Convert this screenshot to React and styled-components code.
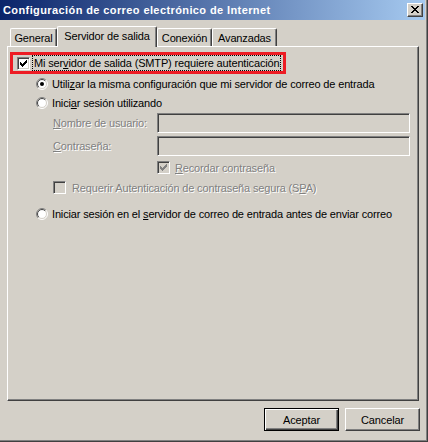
import React from 'react'
import styled, { createGlobalStyle } from 'styled-components'

const GlobalStyle = createGlobalStyle`
  body {
    margin: 0;
    background: #d4d0c8;
  }
`;

const face = '#d4d0c8';
const shadow = '#808080';
const dark = '#404040';

const Outer = styled.div`
  width: 428px;
  height: 442px;
  box-sizing: border-box;
  border-right: 1px solid ${dark};
  border-bottom: 1px solid ${dark};
  font-family: "Liberation Sans", Arial, sans-serif;
  font-size: 11px;
  letter-spacing: -0.15px;
  color: #000;
`;

const Inner = styled.div`
  height: 100%;
  box-sizing: border-box;
  background: ${face};
  border-right: 1px solid ${shadow};
  border-bottom: 1px solid ${shadow};
  padding-right: 1px;
  display: flex;
  flex-direction: column;
`;

const TitleBar = styled.div`
  height: 20px;
  display: flex;
  align-items: center;
  justify-content: space-between;
  padding: 0 2px 0 3px;
  background: linear-gradient(to right, #0a246a, #a6caf0);
  color: #fff;
  font-weight: bold;
  font-size: 11px;
  letter-spacing: 0.4px;
`;

const CloseButton = styled.div`
  width: 16px;
  height: 14px;
  box-sizing: border-box;
  background: ${face};
  border-top: 1px solid #fff;
  border-left: 1px solid #fff;
  border-right: 1px solid ${dark};
  border-bottom: 1px solid ${dark};
  box-shadow: inset -1px -1px 0 ${shadow};
  display: flex;
  padding: 2px 0 0 3px;
`;

const Body = styled.div`
  flex: 1;
  padding: 6px 6px 0 7px;
  display: flex;
  flex-direction: column;
`;

const TabStrip = styled.div`
  height: 20px;
  display: flex;
  align-items: flex-end;
  padding-left: 3px;
  position: relative;
  z-index: 1;
`;

const Tab = styled.div`
  width: ${p => p.$w}px;
  height: ${p => (p.$active ? 21 : 18)}px;
  margin-bottom: ${p => (p.$active ? -1 : 0)}px;
  box-sizing: border-box;
  background: ${face};
  border-top: 1px solid #fff;
  border-left: 1px solid #fff;
  border-right: 1px solid ${dark};
  border-top-left-radius: 2px;
  border-top-right-radius: 2px;
  box-shadow: inset -1px 0 0 ${shadow};
  display: flex;
  justify-content: center;
  padding-top: 3px;
  white-space: nowrap;
`;

const Panel = styled.div`
  height: 355px;
  box-sizing: border-box;
  border-top: 1px solid #fff;
  border-left: 1px solid #fff;
  border-right: 1px solid ${dark};
  border-bottom: 1px solid ${dark};
  box-shadow: inset -1px -1px 0 ${shadow};
  padding: 5px 0 0 2px;
  display: flex;
  flex-direction: column;
`;

const Highlight = styled.div`
  width: 276px;
  height: 22px;
  box-sizing: border-box;
  border: 3px solid #ed1c24;
  display: flex;
  align-items: center;
  gap: 3px;
  padding-left: 4px;
  white-space: nowrap;
`;

const Row = styled.div`
  height: ${p => p.$h ?? 19}px;
  margin-top: ${p => p.$top ?? 0}px;
  margin-left: ${p => p.$indent}px;
  display: flex;
  align-items: center;
  gap: ${p => p.$gap ?? 4}px;
  white-space: nowrap;
`;

const Label = styled.span`
  padding: 0 1px;
  color: ${p => (p.$disabled ? shadow : '#000')};
  text-shadow: ${p => (p.$disabled ? '1px 1px 0 #fff' : 'none')};
  outline: ${p => (p.$focus ? '1px dotted #000' : 'none')};
  line-height: 14px;
`;

const FieldLabel = styled(Label)`
  width: 104px;
  flex: none;
  padding: 0;
`;

const Field = styled.div`
  width: 253px;
  height: 20px;
  box-sizing: border-box;
  background: ${face};
  border-top: 1px solid ${shadow};
  border-left: 1px solid ${shadow};
  border-right: 1px solid #fff;
  border-bottom: 1px solid #fff;
  box-shadow: inset 1px 1px 0 ${dark}, inset -1px -1px 0 ${face};
`;

const Box = styled.span`
  width: 13px;
  height: 13px;
  flex: none;
  box-sizing: border-box;
  background: ${p => (p.$disabled ? face : '#fff')};
  border-top: 1px solid ${shadow};
  border-left: 1px solid ${shadow};
  border-right: 1px solid #fff;
  border-bottom: 1px solid #fff;
  box-shadow: inset 1px 1px 0 ${dark}, inset -1px -1px 0 ${face};
  display: flex;
  padding: 2px 0 0 2px;
`;

const ButtonRow = styled.div`
  display: flex;
  justify-content: flex-end;
  gap: 6px;
  margin-top: 7px;
  margin-right: -1px;
`;

const Button = styled.div`
  width: 75px;
  height: 23px;
  box-sizing: border-box;
  display: flex;
  align-items: center;
  justify-content: center;
  background: ${face};
  border: 1px solid ${p => (p.$default ? '#000' : dark)};
  border-top-color: ${p => (p.$default ? '#000' : '#fff')};
  border-left-color: ${p => (p.$default ? '#000' : '#fff')};
  box-shadow: ${p =>
    p.$default
      ? `inset 1px 1px 0 #fff, inset -1px -1px 0 ${dark}, inset -2px -2px 0 ${shadow}`
      : `inset -1px -1px 0 ${shadow}`};
`;

const checkPixels = [
  [6, 0], [5, 1], [6, 1], [0, 2], [4, 2], [5, 2], [6, 2],
  [0, 3], [1, 3], [3, 3], [4, 3], [5, 3], [0, 4], [1, 4], [2, 4], [3, 4], [4, 4],
  [1, 5], [2, 5], [3, 5], [2, 6],
];

const closePixels = [
  [0, 0], [1, 0], [6, 0], [7, 0], [1, 1], [2, 1], [5, 1], [6, 1],
  [2, 2], [3, 2], [4, 2], [5, 2], [3, 3], [4, 3],
  [2, 4], [3, 4], [4, 4], [5, 4], [1, 5], [2, 5], [5, 5], [6, 5],
  [0, 6], [1, 6], [6, 6], [7, 6],
];

function Pixels({ points, w, h, color }) {
  return (
    <svg width={w} height={h} viewBox={`0 0 ${w} ${h}`} shapeRendering="crispEdges">
      {points.map(([x, y]) => (
        <rect key={x + '-' + y} x={x} y={y} width="1" height="1" fill={color} />
      ))}
    </svg>
  );
}

function Checkbox({ checked, disabled }) {
  return (
    <Box $disabled={disabled}>
      {checked && <Pixels points={checkPixels} w={7} h={7} color={disabled ? shadow : '#000'} />}
    </Box>
  );
}

function arc(r, start) {
  const k = r * Math.SQRT1_2;
  const a = start ? [6 - k, 6 + k] : [6 + k, 6 - k];
  const b = start ? [6 + k, 6 - k] : [6 - k, 6 + k];
  return `M${a[0]} ${a[1]} A${r} ${r} 0 0 1 ${b[0]} ${b[1]}`;
}

function Radio({ checked }) {
  return (
    <svg width="12" height="12" viewBox="0 0 12 12" style={{ flex: 'none' }}>
      <circle cx="6" cy="6" r="5" fill="#fff" />
      <path d={arc(5.5, true)} stroke={shadow} fill="none" />
      <path d={arc(5.5, false)} stroke="#fff" fill="none" />
      <path d={arc(4.5, true)} stroke={dark} fill="none" />
      <path d={arc(4.5, false)} stroke={face} fill="none" />
      {checked && <circle cx="6" cy="6" r="2" fill="#000" />}
    </svg>
  );
}

export default function App() {
  return (
    <>
      <GlobalStyle />
      <Outer>
        <Inner>
          <TitleBar>
            <span>Configuración de correo electrónico de Internet</span>
            <CloseButton>
              <Pixels points={closePixels} w={8} h={7} color="#000" />
            </CloseButton>
          </TitleBar>
          <Body>
            <TabStrip>
              <Tab $w={47}>General</Tab>
              <Tab $w={100} $active>Servidor de salida</Tab>
              <Tab $w={55}>Conexión</Tab>
              <Tab $w={65}>Avanzadas</Tab>
            </TabStrip>
            <Panel>
              <Highlight>
                <Checkbox checked />
                <Label $focus>
                  Mi ser<u>v</u>idor de salida (SMTP) requiere autenticación
                </Label>
              </Highlight>
              <Row $indent={26} $gap={3}>
                <Radio checked />
                <Label>Utili<u>z</u>ar la misma configuración que mi servidor de correo de entrada</Label>
              </Row>
              <Row $indent={26} $gap={3}>
                <Radio />
                <Label>Inici<u>a</u>r sesión utilizando</Label>
              </Row>
              <Row $indent={43} $h={20} $top={1} $gap={0}>
                <FieldLabel $disabled><u>N</u>ombre de usuario:</FieldLabel>
                <Field />
              </Row>
              <Row $indent={43} $h={20} $top={3} $gap={0}>
                <FieldLabel $disabled><u>C</u>ontraseña:</FieldLabel>
                <Field />
              </Row>
              <Row $indent={147} $top={2}>
                <Checkbox checked disabled />
                <Label $disabled><u>R</u>ecordar contraseña</Label>
              </Row>
              <Row $indent={43} $top={1} $gap={5}>
                <Checkbox disabled />
                <Label $disabled>Requerir Autenticación de contraseña segura (S<u>P</u>A)</Label>
              </Row>
              <Row $indent={26} $top={7} $gap={3}>
                <Radio />
                <Label>Iniciar sesión en el <u>s</u>ervidor de correo de entrada antes de enviar correo</Label>
              </Row>
            </Panel>
            <ButtonRow>
              <Button $default>Aceptar</Button>
              <Button>Cancelar</Button>
            </ButtonRow>
          </Body>
        </Inner>
      </Outer>
    </>
  );
}
